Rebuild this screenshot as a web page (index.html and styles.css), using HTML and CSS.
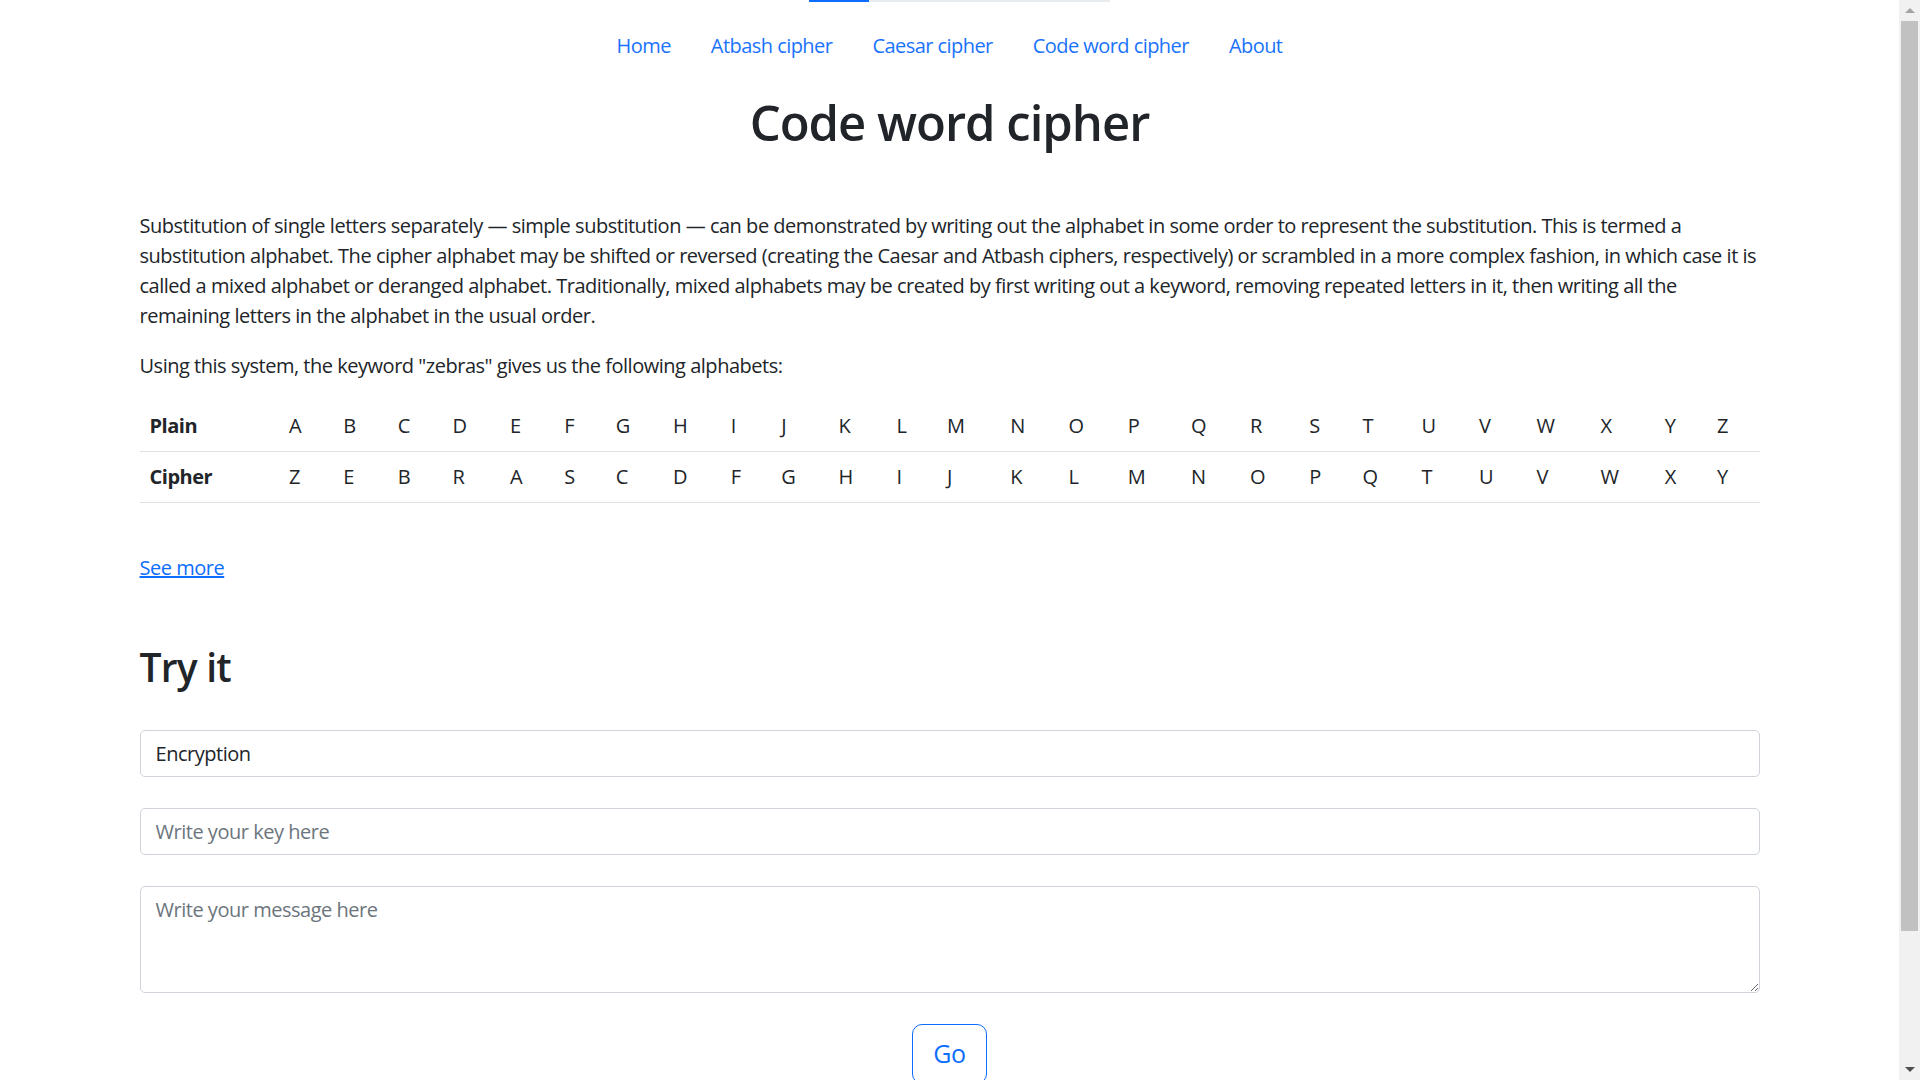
FILE: index.html
```html
<!DOCTYPE html>
<html lang="en">
<head>
<meta charset="utf-8">
<title>Code word cipher</title>
<link rel="stylesheet" href="styles.css">
</head>
<body>
<div class="viewport">
  <div class="page">
    <div class="progress"><div class="progress-fill"></div></div>
    <nav class="nav">
      <a href="#" class="nav-link">Home</a>
      <a href="#" class="nav-link">Atbash cipher</a>
      <a href="#" class="nav-link">Caesar cipher</a>
      <a href="#" class="nav-link">Code word cipher</a>
      <a href="#" class="nav-link">About</a>
    </nav>
    <main class="container">
      <h1 class="title">Code word cipher</h1>
      <p class="text">Substitution of single letters separately — simple substitution — can be demonstrated by writing out the alphabet in some order to represent the substitution. This is termed a substitution alphabet. The cipher alphabet may be shifted or reversed (creating the Caesar and Atbash ciphers, respectively) or scrambled in a more complex fashion, in which case it is called a mixed alphabet or deranged alphabet. Traditionally, mixed alphabets may be created by first writing out a keyword, removing repeated letters in it, then writing all the remaining letters in the alphabet in the usual order.</p>
      <p class="text">Using this system, the keyword "zebras" gives us the following alphabets:</p>
      <table class="alpha">
        <tr><th>Plain</th><td>A</td><td>B</td><td>C</td><td>D</td><td>E</td><td>F</td><td>G</td><td>H</td><td>I</td><td>J</td><td>K</td><td>L</td><td>M</td><td>N</td><td>O</td><td>P</td><td>Q</td><td>R</td><td>S</td><td>T</td><td>U</td><td>V</td><td>W</td><td>X</td><td>Y</td><td>Z</td></tr>
        <tr><th>Cipher</th><td>Z</td><td>E</td><td>B</td><td>R</td><td>A</td><td>S</td><td>C</td><td>D</td><td>F</td><td>G</td><td>H</td><td>I</td><td>J</td><td>K</td><td>L</td><td>M</td><td>N</td><td>O</td><td>P</td><td>Q</td><td>T</td><td>U</td><td>V</td><td>W</td><td>X</td><td>Y</td></tr>
      </table>
      <p class="more"><a href="#" class="link">See more</a></p>
      <h2 class="subtitle">Try it</h2>
      <form class="form">
        <select class="field select"><option>Encryption</option><option>Decryption</option></select>
        <input class="field" type="text" placeholder="Write your key here">
        <textarea class="field area" rows="3" placeholder="Write your message here"></textarea>
        <div class="actions"><button type="button" class="btn">Go</button></div>
      </form>
    </main>
  </div>
  <div class="scrollbar">
    <div class="sb-btn"><span class="tri-up"></span></div>
    <div class="sb-thumb"></div>
    <div class="sb-rest"></div>
    <div class="sb-btn"><span class="tri-down"></span></div>
  </div>
</div>
</body>
</html>
```

FILE: styles.css
```css
* { box-sizing: border-box; }
html, body { margin: 0; padding: 0; height: 100%; overflow: hidden; }
body {
  font-family: "Open Sans", "Noto Sans", sans-serif;
  font-size: 20px;
  line-height: 30px;
  letter-spacing: -0.48px;
  color: #212529;
  background: #fff;
}
.viewport { display: flex; height: 1080px; }
.page { flex: 1; min-width: 0; overflow: hidden; }

.progress { width: 301px; height: 2px; margin: 0 auto; background: #e9ecef; transform: translateX(10px); }
.progress-fill { width: 60px; height: 100%; background: #0d6efd; }

.nav { display: flex; justify-content: center; padding-top: 19px; }
.nav-link { color: #1a73fd; text-decoration: none; padding: 10px 20px; font-weight: 400; letter-spacing: -0.55px; }

.container { width: 1650px; max-width: 100%; margin: 0 auto; padding: 0 15px; }
.title { text-align: center; font-size: 49px; line-height: 60px; font-weight: 600; letter-spacing: -1px; margin: 21px 0 59px; }
.text { margin: 0 0 20px; }

.alpha { width: 100%; border-collapse: collapse; margin-bottom: 20px; }
.alpha th, .alpha td { text-align: left; padding: 10px; border-bottom: 1px solid #dee2e6; font-weight: 400; }
.alpha th { font-weight: 700; }

.more { margin: 50px 0 0; }
.link { color: #0d6efd; }

.subtitle { font-size: 39px; line-height: 48px; font-weight: 600; letter-spacing: -0.8px; margin: 60px 0 39px; }

.form { display: flex; flex-direction: column; gap: 31px; }
.field {
  display: block; width: 100%;
  font: inherit; letter-spacing: inherit; color: #212529;
  padding: 7.5px 15px;
  border: 1px solid #ced4da; border-radius: 5px;
  background: #fff;
  appearance: none;
}
.field::placeholder { color: #6c757d; }
.area { resize: vertical; height: 107px; }
.actions { display: flex; justify-content: center; }
.btn {
  font: inherit; font-size: 25px; line-height: 37.5px; letter-spacing: -0.3px;
  padding: 10px 20px; color: #0d6efd; background: #fff;
  border: 1px solid #0d6efd; border-radius: 10px;
}

.scrollbar { width: 21px; flex: none; background: #f1f1f1; display: flex; flex-direction: column; }
.sb-btn { height: 21px; display: flex; align-items: center; justify-content: center; }
.tri-up { width: 0; height: 0; border-left: 5px solid transparent; border-right: 5px solid transparent; border-bottom: 5px solid #a3a3a3; }
.tri-down { width: 0; height: 0; border-left: 5px solid transparent; border-right: 5px solid transparent; border-top: 5px solid #505050; }
.sb-thumb { height: 910px; margin: 0 2px; background: #c1c1c1; }
.sb-rest { flex: 1; }
```
